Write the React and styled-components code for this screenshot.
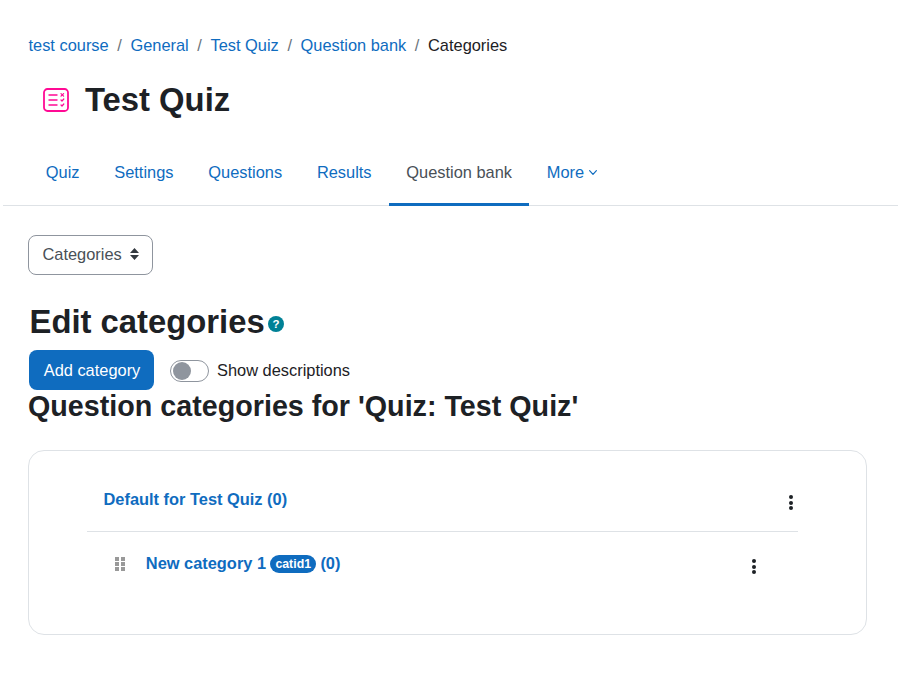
import React from "react";
import styled, { createGlobalStyle } from "styled-components";

const GlobalStyle = createGlobalStyle`
  html, body {
    margin: 0;
    padding: 0;
    background: #fff;
    font-family: "Liberation Sans", Arial, sans-serif;
    font-size: 16.4px;
    color: #1d2125;
  }
`;

const Page = styled.div`
  width: 898px;
  height: 687px;
  overflow: hidden;
  padding-left: 3px;
  box-sizing: border-box;
`;

const Breadcrumb = styled.nav`
  display: flex;
  align-items: center;
  height: 18px;
  margin: 36px 0 0 25.5px;
  line-height: 18px;
`;

const Crumb = styled.a`
  color: #0f6cbf;
`;

const Sep = styled.span`
  color: #6a737b;
  padding: 0 8.6px;
`;

const Current = styled.span`
  color: #1d2125;
`;

const TitleRow = styled.div`
  display: flex;
  align-items: center;
  height: 40px;
  margin: 26px 0 0 40px;
`;

const Title = styled.h1`
  margin: 0 0 0 16px;
  font-size: 32.8px;
  line-height: 38px;
  font-weight: 700;
`;

const Tabs = styled.ul`
  display: flex;
  list-style: none;
  margin: 22px 0 0;
  padding: 0 0 0 25.4px;
  height: 63px;
  border-bottom: 1px solid #dee2e6;
`;

const Tab = styled.li`
  display: flex;
  align-items: center;
  gap: 5px;
  box-sizing: border-box;
  height: 64px;
  padding: 0 17.4px 1px;
  color: ${(p) => (p.$active ? "#495057" : "#0f6cbf")};
  border-bottom: 3px solid ${(p) => (p.$active ? "#0f6cbf" : "transparent")};
`;

const Content = styled.main`
  padding-left: 25px;
`;

const SelectButton = styled.div`
  display: inline-flex;
  align-items: center;
  gap: 8px;
  box-sizing: border-box;
  width: 125px;
  height: 40px;
  margin-top: 29px;
  padding: 0 0 2px 13.5px;
  border: 1px solid #8f959e;
  border-radius: 8px;
  color: #495057;
`;

const HeadingRow = styled.div`
  display: flex;
  align-items: center;
  margin: 26px 0 0 1.5px;
  height: 42px;
`;

const Heading = styled.h2`
  margin: 0;
  font-size: 32.8px;
  line-height: 38px;
  font-weight: 700;
`;

const HelpIcon = styled.span`
  display: inline-flex;
  align-items: center;
  justify-content: center;
  width: 16px;
  height: 16px;
  margin: 4px 0 0 3.5px;
  border-radius: 50%;
  background: #008196;
  color: #fff;
  font-size: 11.5px;
  font-weight: 700;
`;

const ActionRow = styled.div`
  display: flex;
  align-items: center;
  margin: 7px 0 0 1px;
`;

const PrimaryButton = styled.button`
  box-sizing: border-box;
  width: 125px;
  height: 40px;
  padding: 0 0 0 1px;
  border: 0;
  border-radius: 8px;
  background: #0f6cbf;
  color: #fff;
  font: inherit;
`;

const Toggle = styled.span`
  display: inline-flex;
  align-items: center;
  box-sizing: border-box;
  width: 39px;
  height: 22px;
  margin: 2px 8px 0 16px;
  padding-left: 2px;
  border: 1px solid #8f959e;
  border-radius: 11px;
  &::before {
    content: "";
    width: 18px;
    height: 18px;
    border-radius: 50%;
    background: #8f959e;
  }
`;

const ToggleLabel = styled.span`
  margin-top: 0;
`;

const SubHeading = styled.h3`
  margin: 0;
  font-size: 28.7px;
  line-height: 33px;
  font-weight: 700;
  height: 44px;
`;

const Card = styled.section`
  box-sizing: border-box;
  width: 839px;
  height: 185px;
  margin-top: 16px;
  padding: 0 68px 0 58px;
  border: 1px solid #dee2e6;
  border-radius: 16px;
`;

const Row = styled.div`
  display: flex;
  align-items: flex-start;
  box-sizing: border-box;
  height: ${(p) => p.$height}px;
  padding: ${(p) => p.$top}px ${(p) => p.$right}px 0 ${(p) => p.$left}px;
  border-bottom: ${(p) => (p.$divided ? "1px solid #dee2e6" : "0")};
  font-weight: 700;
`;

const CategoryLink = styled.a`
  color: #0f6cbf;
  line-height: 20px;
`;

const Badge = styled.span`
  display: inline-block;
  margin: 0 4px;
  padding: 0 5.4px;
  border-radius: 9px;
  background: #0f6cbf;
  color: #fff;
  font-size: 12.3px;
  line-height: 18px;
  vertical-align: 1px;
`;

const Grip = styled.span`
  display: grid;
  grid-template-columns: repeat(2, 4px);
  grid-auto-rows: 4px;
  gap: 1px 2px;
  margin: 4px 20.8px 0 2px;
  & > i {
    background: #999;
  }
`;

const Kebab = styled.span`
  display: flex;
  flex-direction: column;
  gap: 1.5px;
  margin: ${(p) => p.$top}px 1px 0 auto;
  & > i {
    width: 4px;
    height: 4px;
    border-radius: 50%;
    background: #1d2125;
  }
`;

const QuizIcon = () => (
  <svg width="26" height="24" viewBox="0 0 26 24" fill="none" stroke="#ff0a94" strokeWidth="1.8" strokeLinecap="round" strokeLinejoin="round">
    <rect x="1" y="1" width="24" height="22" rx="3.5" />
    <path d="M6 7h8M6 12h8M6 17h8" strokeWidth="1.4" />
    <path d="M18 5.6l2.6 2.6M20.6 5.6L18 8.2M18 12l1 1 1.8-2M18 17l1 1 1.8-2" strokeWidth="1.2" />
  </svg>
);

const SortIcon = () => (
  <svg width="9" height="12" viewBox="0 0 9 12" fill="#343a40">
    <path d="M4.5 0L9 5H0zM4.5 12L0 7h9z" />
  </svg>
);

const ChevronIcon = () => (
  <svg width="8" height="5" viewBox="0 0 8 5" fill="none" stroke="#0f6cbf" strokeWidth="1.2" strokeLinecap="round" strokeLinejoin="round">
    <path d="M.6.7L4 4.3 7.4.7" />
  </svg>
);

const tabs = ["Quiz", "Settings", "Questions", "Results", "Question bank"];
const crumbs = ["test course", "General", "Test Quiz", "Question bank"];

export default function App() {
  return (
    <Page>
      <GlobalStyle />
      <Breadcrumb>
        {crumbs.map((c) => (
          <React.Fragment key={c}>
            <Crumb>{c}</Crumb>
            <Sep>/</Sep>
          </React.Fragment>
        ))}
        <Current>Categories</Current>
      </Breadcrumb>
      <TitleRow>
        <QuizIcon />
        <Title>Test Quiz</Title>
      </TitleRow>
      <Tabs>
        {tabs.map((t) => (
          <Tab key={t} $active={t === "Question bank"}>{t}</Tab>
        ))}
        <Tab>
          More
          <ChevronIcon />
        </Tab>
      </Tabs>
      <Content>
        <SelectButton>
          Categories
          <SortIcon />
        </SelectButton>
        <HeadingRow>
          <Heading>Edit categories</Heading>
          <HelpIcon>?</HelpIcon>
        </HeadingRow>
        <ActionRow>
          <PrimaryButton>Add category</PrimaryButton>
          <Toggle />
          <ToggleLabel>Show descriptions</ToggleLabel>
        </ActionRow>
        <SubHeading>Question categories for 'Quiz: Test Quiz'</SubHeading>
        <Card>
          <Row $height={81} $top={38} $left={16.5} $right={4} $divided>
            <CategoryLink>Default for Test Quiz (0)</CategoryLink>
            <Kebab $top={6}><i /><i /><i /></Kebab>
          </Row>
          <Row $height={80} $top={21} $left={26} $right={41}>
            <Grip><i /><i /><i /><i /><i /><i /></Grip>
            <CategoryLink>
              New category 1<Badge>catid1</Badge>(0)
            </CategoryLink>
            <Kebab $top={6}><i /><i /><i /></Kebab>
          </Row>
        </Card>
      </Content>
    </Page>
  );
}
